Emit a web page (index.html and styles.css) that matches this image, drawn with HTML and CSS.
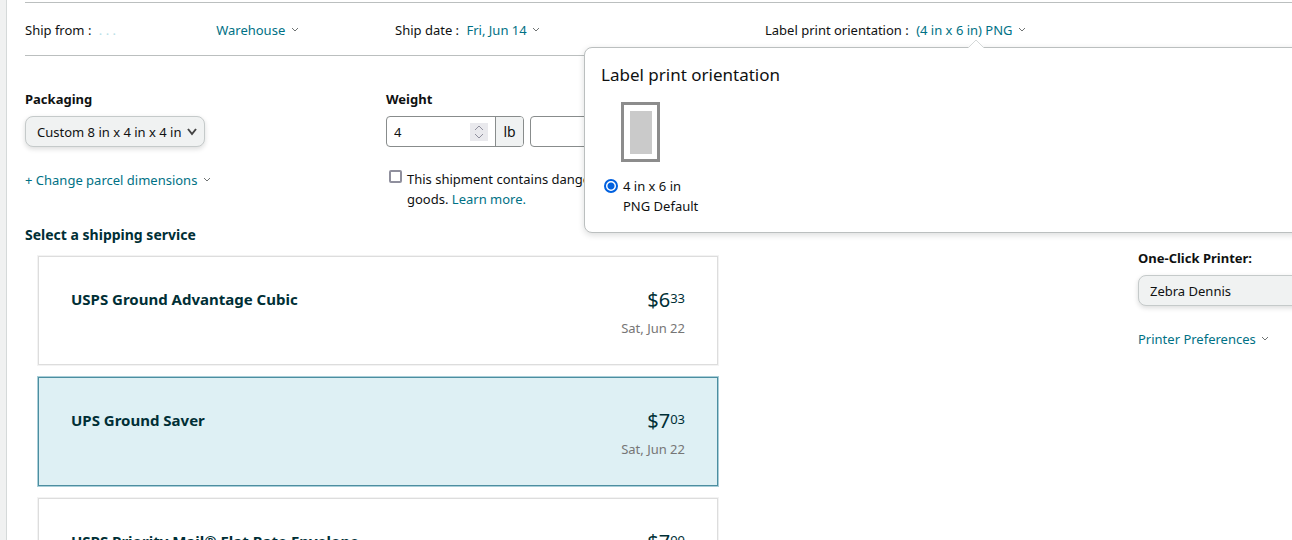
FILE: index.html
```
<!DOCTYPE html>
<html lang="en">
<head>
  <meta charset="UTF-8">
  <meta name="viewport" content="width=device-width, initial-scale=1.0">
  <title>Buy shipping</title>
  <link rel="stylesheet" href="styles.css">
</head>
<body>
  <main class="page">

    <!-- Ship from / date / label bar -->
    <div class="ship-bar">
      <div class="ship-item">
        <span>Ship from :</span>
        <span class="address">. . .</span>
        <a href="#" class="link">Warehouse <svg class="caret" viewBox="0 0 8 6"><path d="M1 1l3 3 3-3"/></svg></a>
      </div>
      <div class="ship-item">
        <span>Ship date :</span>
        <a href="#" class="link">Fri, Jun 14 <svg class="caret" viewBox="0 0 8 6"><path d="M1 1l3 3 3-3"/></svg></a>
      </div>
      <div class="ship-item">
        <span>Label print orientation :</span>
        <a href="#" class="link">(4 in x 6 in) PNG <svg class="caret" viewBox="0 0 8 6"><path d="M1 1l3 3 3-3"/></svg></a>

        <div class="popover">
          <svg class="popover-arrow" viewBox="0 0 18 9"><path d="M1 9l8-8 8 8"/></svg>
          <h2 class="popover-title">Label print orientation</h2>
          <svg class="label-preview" viewBox="0 0 39 60">
            <rect x="1.5" y="1.5" width="36" height="57" fill="#fff" stroke="#8c8c8c" stroke-width="3"/>
            <rect x="9" y="9" width="22" height="43" fill="#cacaca"/>
          </svg>
          <label class="option">
            <input type="radio" class="radio" name="orientation" checked>
            <span>4 in x 6 in<br>PNG Default</span>
          </label>
        </div>
      </div>
    </div>

    <div class="columns">
      <div class="main-column">
        <div class="parcel">
          <div class="packaging">
            <label class="label" for="packaging">Packaging</label>
            <div class="select-wrap">
              <select id="packaging" class="select">
                <option>Custom 8 in x 4 in x 4 in</option>
              </select>
              <svg class="select-arrow" viewBox="0 0 10 8"><path d="M1 1l4 5 4-5"/></svg>
            </div>
            <a href="#" class="link">+ Change parcel dimensions <svg class="caret" viewBox="0 0 8 6"><path d="M1 1l3 3 3-3"/></svg></a>
          </div>

          <div class="weight">
            <label class="label" for="pounds">Weight</label>
            <div class="weight-inputs">
              <div class="unit-group">
                <input type="number" id="pounds" class="number" value="4">
                <svg class="spinner" viewBox="0 0 18 18"><path d="M5 7l4-4 4 4M5 11l4 4 4-4"/></svg>
                <span class="unit">lb</span>
              </div>
              <div class="unit-group">
                <input type="number" class="number" aria-label="Ounces">
                <span class="unit">oz</span>
              </div>
            </div>
            <div class="dangerous">
              <input type="checkbox" class="checkbox" id="dangerous">
              <div><label for="dangerous">This shipment contains dangerous goods.</label> <a href="#" class="link">Learn more.</a></div>
            </div>
          </div>
        </div>

        <h3 class="service-heading">Select a shipping service</h3>
        <div class="services">
          <div class="service">
            <div class="service-name">USPS Ground Advantage Cubic</div>
            <div class="service-cost">
              <div class="price">$6<sup>33</sup></div>
              <div class="arrival">Sat, Jun 22</div>
            </div>
          </div>
          <div class="service selected">
            <div class="service-name">UPS Ground Saver</div>
            <div class="service-cost">
              <div class="price">$7<sup>03</sup></div>
              <div class="arrival">Sat, Jun 22</div>
            </div>
          </div>
          <div class="service">
            <div class="service-name">USPS Priority Mail® Flat Rate Envelope</div>
            <div class="service-cost">
              <div class="price">$7<sup>99</sup></div>
              <div class="arrival">Sat, Jun 22</div>
            </div>
          </div>
        </div>
      </div>

      <div class="printer">
        <label class="label" for="printer">One-Click Printer:</label>
        <div class="select-wrap">
          <select id="printer" class="select printer-select">
            <option>Zebra Dennis</option>
          </select>
        </div>
        <a href="#" class="link">Printer Preferences <svg class="caret" viewBox="0 0 8 6"><path d="M1 1l3 3 3-3"/></svg></a>
      </div>
    </div>
  </main>
</body>
</html>
```
FILE: styles.css
```
* {
  box-sizing: border-box;
}

body {
  margin: 0;
  height: 100vh;
  overflow: hidden;
  background: #f0f1f1;
  color: #0f1111;
  font-family: "Noto Sans", "Open Sans", sans-serif;
  font-size: 13px;
  line-height: 20px;
}

input,
select {
  font: inherit;
  color: inherit;
}

.page {
  min-height: 100vh;
  margin-left: 6px;
  padding: 2px 0 0 18px;
  border-left: 1px solid #d5d9d9;
  background: #fff;
}

.link {
  color: #007185;
  text-decoration: none;
}

.caret {
  width: 8px;
  height: 6px;
  margin-left: 2px;
  vertical-align: 2px;
  fill: none;
  stroke: #6f7373;
}

.label {
  display: block;
  margin-bottom: 7px;
  font-weight: bold;
}

/* Top bar */
.ship-bar {
  display: grid;
  grid-template-columns: 370px 370px 1fr;
  border-top: 1px solid #bbbfbf;
  border-bottom: 1px solid #bbbfbf;
}

.ship-item {
  position: relative;
  padding: 17px 0 15px;
}

.ship-item .link {
  margin-left: 4px;
}

.address {
  display: inline-block;
  width: 110px;
  margin-left: 4px;
  color: #b9e0e6;
}

.popover {
  position: absolute;
  z-index: 2;
  top: 44px;
  left: -181px;
  width: 800px;
  padding: 17px 16px 16px;
  border: 1px solid #bbbfbf;
  border-radius: 8px;
  background: #fff;
  box-shadow: 0 2px 6px rgba(15, 17, 17, 0.15);
}

.popover-arrow {
  position: absolute;
  top: -9px;
  left: 382px;
  width: 18px;
  height: 9px;
  fill: #fff;
  stroke: #d5d9d9;
}

.popover-title {
  margin: 0 0 17px;
  font-size: 17px;
  font-weight: normal;
  line-height: 20px;
}

.label-preview {
  display: block;
  width: 39px;
  height: 60px;
  margin: 0 0 14px 20px;
}

.option {
  display: flex;
  gap: 4px;
}

.radio {
  width: 14px;
  height: 14px;
  margin: 3px 1px 0 3px;
  appearance: none;
  border: 2px solid #0060df;
  border-radius: 50%;
  background: radial-gradient(#0060df 3px, #fff 4px);
}

/* Body columns */
.columns {
  display: grid;
  grid-template-columns: 693px 220px;
  column-gap: 420px;
}

.parcel {
  display: grid;
  grid-template-columns: 361px 1fr;
  padding-top: 33px;
}

.select-wrap {
  position: relative;
  width: fit-content;
  margin-bottom: 23px;
}

.select {
  display: block;
  width: 180px;
  height: 31px;
  padding: 0 11px;
  appearance: none;
  border: 1px solid #c5caca;
  border-radius: 8px;
  background: #f0f2f2;
  box-shadow: 0 2px 5px rgba(15, 17, 17, 0.15);
}

.select-arrow {
  position: absolute;
  top: 12px;
  right: 8px;
  width: 10px;
  height: 8px;
  fill: none;
  stroke: #444;
  stroke-width: 2;
  pointer-events: none;
}

.weight-inputs {
  display: flex;
  gap: 6px;
  margin-bottom: 22px;
}

.unit-group {
  display: flex;
  align-items: center;
  width: 138px;
  height: 31px;
  overflow: hidden;
  border: 1px solid #888c8c;
  border-radius: 4px;
}

.number {
  flex: 1;
  min-width: 0;
  padding: 0 7px;
  appearance: textfield;
  border: 0;
  outline: 0;
}

.spinner {
  width: 18px;
  height: 18px;
  margin-right: 7px;
  background: #e9e9ed;
  fill: none;
  stroke: #8f8f9d;
}

.unit {
  width: 28px;
  border-left: 1px solid #888c8c;
  background: #f0f2f2;
  font-size: 14px;
  line-height: 29px;
  text-align: center;
}

.dangerous {
  display: flex;
  gap: 5px;
  width: 240px;
}

.checkbox {
  flex: none;
  width: 13px;
  height: 13px;
  margin: 1px 0 0 3px;
  appearance: none;
  border: 2px solid #8f8f9d;
  border-radius: 2px;
}

/* Shipping services */
.service-heading {
  margin: 16px 0 11px;
  color: #002f36;
  font-size: 14px;
  line-height: 20px;
}

.services {
  display: flex;
  flex-direction: column;
  gap: 12px;
  padding-left: 13px;
}

.service {
  display: flex;
  justify-content: space-between;
  height: 109px;
  padding: 32px 32px 0;
  border: 1px solid #ddd;
  color: #002f36;
  box-shadow: 0 0 0 1px #f3f3f3;
}

.service.selected {
  border-color: #4c8ea0;
  background: #def0f4;
  box-shadow: 0 0 0 1px #a9ced8;
}

.service-name {
  font-size: 15px;
  font-weight: bold;
}

.service-cost {
  text-align: right;
}

.price {
  margin-bottom: 7px;
  font-size: 20px;
  line-height: 22px;
}

.price sup {
  font-size: 13px;
  line-height: 1;
  vertical-align: 4px;
}

.arrival {
  color: #767676;
}

/* Printer */
.printer {
  padding-top: 192px;
}

.printer-select {
  width: 220px;
}
```
